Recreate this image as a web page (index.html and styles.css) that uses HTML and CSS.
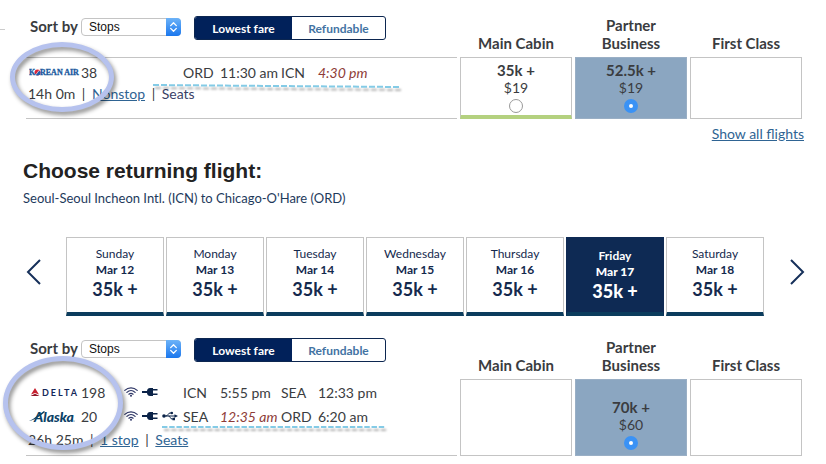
FILE: index.html
```html
<!DOCTYPE html>
<html lang="en">
<head>
  <meta charset="UTF-8">
  <title>Choose returning flight</title>
  <meta name="viewport" content="width=device-width, initial-scale=1.0">
  <link rel="stylesheet" href="styles.css">
</head>
<body>

  <!-- shared icons -->
  <svg class="sprite" aria-hidden="true">
    <symbol id="stepper" viewBox="0 0 16 18">
      <path d="M5 7.5 L8 4.5 L11 7.5 M5 10.5 L8 13.5 L11 10.5" fill="none" stroke="#fff" stroke-width="1.4" stroke-linecap="round" stroke-linejoin="round"/>
    </symbol>
    <symbol id="wifi" viewBox="0 0 14 10">
      <path d="M0.8 3.4 C4.4 0 9.6 0 13.2 3.4 M2.9 5.4 C5.3 3.1 8.7 3.1 11.1 5.4 M4.9 7.2 C6.2 6.1 7.8 6.1 9.1 7.2" fill="none" stroke="#2f3767" stroke-width="1.2" stroke-linecap="round"/>
      <circle cx="7" cy="8.7" r="1" fill="#2f3767"/>
    </symbol>
    <symbol id="plug" viewBox="0 0 16 10">
      <path d="M0 4 H5 C5 2.5 6 1.2 8 1 H11 V9 H8 C6 8.8 5 7.5 5 6 H0 Z" fill="#0b2348"/>
      <path d="M11 2.7 H15.5 M11 7.3 H15.5" stroke="#0b2348" stroke-width="1.6"/>
    </symbol>
    <symbol id="usb" viewBox="0 0 16 10">
      <path d="M2 5 H13 M4 5 C6 5 6 2 8 2 H9.5 M6.5 5 C8.5 5 8 8 10 8 H11" fill="none" stroke="#0b2348" stroke-width="1"/>
      <circle cx="2" cy="5" r="1.8" fill="#0b2348"/>
      <circle cx="9.8" cy="2" r="1.3" fill="#0b2348"/>
      <path d="M12.5 3.2 L16 5 L12.5 6.8 Z M10.5 6.8 H13 V9.2 H10.5 Z" fill="#0b2348"/>
    </symbol>
  </svg>

  <main class="page">

    <table class="flights">
      <thead>
        <tr>
          <th class="tools">
            <div class="toolbar">
              <label class="sort-label" for="sortOut">Sort by</label>
              <span class="select">
                <select id="sortOut">
                  <option>Stops</option>
                </select>
                <svg class="stepper"><use href="#stepper"/></svg>
              </span>
              <div class="toggle">
                <button type="button" class="active">Lowest fare</button>
                <button type="button">Refundable</button>
              </div>
            </div>
          </th>
          <th class="cabin">Main Cabin</th>
          <th class="cabin">Partner Business</th>
          <th class="cabin">First Class</th>
        </tr>
      </thead>
      <tbody>
        <tr class="outbound">
          <td class="flight">
            <div class="leg">
              <svg class="logo" viewBox="0 0 52 14" role="img" aria-label="Korean Air">
                <text class="korean" x="0" y="10">K</text>
                <circle cx="8.5" cy="7.5" r="3" fill="#d8283c"/>
                <path d="M5.5 7.5 A1.5 1.5 0 0 0 8.5 7.5 A1.5 1.5 0 0 1 11.5 7.5 A3 3 0 0 1 5.5 7.5 Z" fill="#1f5fae"/>
                <path d="M6 10.5 L11 4.5" stroke="#fff" stroke-width="0.6"/>
                <text class="korean" x="11" y="10">REAN AIR</text>
              </svg>
              <span>38</span>
              <span class="amenities"></span>
              <span>ORD</span>
              <span>11:30 am</span>
              <span>ICN</span>
              <em>4:30 pm</em>
            </div>
            <div class="details">14h 0m <i>|</i> <a href="#">Nonstop</a> <i>|</i> <a class="plain" href="#">Seats</a></div>
            <svg class="mark-line" viewBox="0 0 248 6" preserveAspectRatio="none"><path d="M0 2 L247 4"/></svg>
            <div class="mark-ring"></div>
          </td>
          <td class="fare lowest">
            <label><b>35k +</b><span>$19</span><input type="radio" name="out"></label>
          </td>
          <td class="fare selected">
            <label><b>52.5k +</b><span>$19</span><input type="radio" name="out" checked></label>
          </td>
          <td class="fare"></td>
        </tr>
      </tbody>
    </table>

    <p class="show-all"><a href="#">Show all flights</a></p>

    <h1>Choose returning flight:</h1>
    <p class="route">Seoul-Seoul Incheon Intl. (ICN) to Chicago-O'Hare (ORD)</p>

    <nav class="dates">
      <button type="button" class="arrow" aria-label="Previous dates">
        <svg viewBox="0 0 16 28"><path d="M14 2 L2 14 L14 26"/></svg>
      </button>
      <div class="days">
        <button type="button" class="day">Sunday<b>Mar 12</b><strong>35k +</strong></button>
        <button type="button" class="day">Monday<b>Mar 13</b><strong>35k +</strong></button>
        <button type="button" class="day">Tuesday<b>Mar 14</b><strong>35k +</strong></button>
        <button type="button" class="day">Wednesday<b>Mar 15</b><strong>35k +</strong></button>
        <button type="button" class="day">Thursday<b>Mar 16</b><strong>35k +</strong></button>
        <button type="button" class="day current">Friday<b>Mar 17</b><strong>35k +</strong></button>
        <button type="button" class="day">Saturday<b>Mar 18</b><strong>35k +</strong></button>
      </div>
      <button type="button" class="arrow next" aria-label="Next dates">
        <svg viewBox="0 0 16 28"><path d="M2 2 L14 14 L2 26"/></svg>
      </button>
    </nav>

    <table class="flights">
      <thead>
        <tr>
          <th class="tools">
            <div class="toolbar">
              <label class="sort-label" for="sortBack">Sort by</label>
              <span class="select">
                <select id="sortBack">
                  <option>Stops</option>
                </select>
                <svg class="stepper"><use href="#stepper"/></svg>
              </span>
              <div class="toggle">
                <button type="button" class="active">Lowest fare</button>
                <button type="button">Refundable</button>
              </div>
            </div>
          </th>
          <th class="cabin">Main Cabin</th>
          <th class="cabin">Partner Business</th>
          <th class="cabin">First Class</th>
        </tr>
      </thead>
      <tbody>
        <tr class="return">
          <td class="flight">
            <div class="leg">
              <svg class="logo" viewBox="0 0 52 14" role="img" aria-label="Delta">
                <path d="M6 3 L6 8 L2 9.5 Z M6 3 L10 9.5 L6 8 Z" fill="#c8202f"/>
                <path d="M1.5 11 L6 8.7 L10.5 11 Z" fill="#8e1526"/>
                <text class="delta" x="13" y="11">DELTA</text>
              </svg>
              <span>198</span>
              <span class="amenities">
                <svg class="wifi"><use href="#wifi"/></svg>
                <svg><use href="#plug"/></svg>
              </span>
              <span>ICN</span>
              <span>5:55 pm</span>
              <span>SEA</span>
              <span>12:33 pm</span>
            </div>
            <div class="leg">
              <svg class="logo tall" viewBox="0 0 52 18" role="img" aria-label="Alaska">
                <path d="M0 14 C5 12 9 8 15 4 L16 5 C11 9 6 13 0 14 Z" fill="#0b4266"/>
                <text class="alaska" x="5" y="15">Alaska</text>
                <circle cx="45" cy="14" r="0.6" fill="#0b4266"/>
              </svg>
              <span>20</span>
              <span class="amenities">
                <svg class="wifi"><use href="#wifi"/></svg>
                <svg><use href="#plug"/></svg>
                <svg><use href="#usb"/></svg>
              </span>
              <span>SEA</span>
              <em>12:35 am</em>
              <span>ORD</span>
              <span>6:20 am</span>
            </div>
            <div class="details">26h 25m <i>|</i> <a href="#">1 stop</a> <i>|</i> <a href="#">Seats</a></div>
            <svg class="mark-line" viewBox="0 0 248 6" preserveAspectRatio="none"><path d="M0 3 L247 3"/></svg>
            <div class="mark-ring"></div>
          </td>
          <td class="fare"></td>
          <td class="fare selected">
            <label><b>70k +</b><span>$60</span><input type="radio" name="back" checked></label>
          </td>
          <td class="fare"></td>
        </tr>
      </tbody>
    </table>

  </main>

</body>
</html>
```
FILE: styles.css
```css
* { box-sizing: border-box; }

body {
  margin: 0;
  background-color: #fff;
  color: #3a3c40;
  font-family: Lato, "Open Sans", sans-serif;
  font-size: 14px;
}

button {
  margin: 0;
  padding: 0;
  border: none;
  background: none;
  font-family: inherit;
  cursor: pointer;
}

a { color: #2f6493; }

h1, p { margin: 0; }

.sprite {
  position: absolute;
  width: 0;
  height: 0;
}

.page {
  position: relative;
  padding: 16px 21px 8px 23px;
}

/* end of the rule that runs in from the left edge */
.page::before {
  content: "";
  position: absolute;
  left: 0;
  top: 29px;
  width: 5px;
  height: 1px;
  background-color: #ccc;
}

/* flight tables */
.flights {
  width: 100%;
  table-layout: fixed;
  border-collapse: separate;
  border-spacing: 3px 0;
}

.flights th, .flights td { padding: 0; }

.cabin {
  width: 112px;
  font-size: 15px;
  line-height: 18px;
  vertical-align: bottom;
}

.flights .cabin { padding: 0 16px 5px; }

.flights .tools {
  padding: 0 0 17px 4px;
  text-align: left;
}

.toolbar {
  display: flex;
  align-items: flex-start;
  height: 24px;
}

.sort-label {
  width: 51px;
  font-size: 15px;
  line-height: 20px;
  white-space: nowrap;
}

.select {
  position: relative;
  width: 100px;
  height: 18px;
  margin: 2px 13px 0 0;
}

.select select {
  display: block;
  width: 100%;
  height: 18px;
  padding: 0 20px 0 7px;
  appearance: none;
  border: 1px solid #c4c4c4;
  border-radius: 4px;
  background-color: #fff;
  color: #111;
  font-family: "Liberation Sans", Arial, sans-serif;
  font-size: 12px;
}

.stepper {
  position: absolute;
  top: 0;
  right: 0;
  width: 15px;
  height: 18px;
  border-radius: 0 4px 4px 0;
  background: linear-gradient(#6db3f8, #1a77ee);
  pointer-events: none;
}

.toggle {
  display: flex;
  height: 24px;
  border: 1px solid #0c2650;
  border-radius: 3px;
  overflow: hidden;
}

.toggle button {
  width: 93px;
  color: #4373a3;
  font-size: 12px;
  font-weight: bold;
}

.toggle .active {
  width: 97px;
  background-color: #01215a;
  color: #fff;
}

.flight {
  position: relative;
  border-top: 1px solid #c4c4c4;
  border-bottom: 1px solid #c4c4c4;
  vertical-align: top;
}

.outbound { height: 62px; }
.outbound .flight { padding-top: 3px; }
.return { height: 77px; }
.return .flight { border-top-color: transparent; }

.leg {
  display: grid;
  grid-template-columns: 52px 42px 60px 37px 61px 37px 1fr;
  align-items: center;
  height: 22px;
  padding-left: 3px;
  white-space: nowrap;
}

.return .leg { height: 24px; }

.leg em { color: #8e3b37; }

.logo {
  width: 52px;
  height: 14px;
}

.logo.tall { height: 18px; }

.korean {
  fill: #1a5a9e;
  stroke: #1a5a9e;
  stroke-width: 0.3px;
  font-family: "Liberation Serif", serif;
  font-size: 8px;
  font-weight: bold;
}

.delta {
  fill: #14285a;
  font-family: Lato, sans-serif;
  font-size: 9px;
  font-weight: bold;
  letter-spacing: 2px;
}

.alaska {
  fill: #0b4266;
  font-family: Lato, sans-serif;
  font-size: 14px;
  font-style: italic;
  font-weight: 900;
}

.amenities {
  display: flex;
  align-items: center;
  gap: 4px;
  padding-left: 1px;
}

.amenities svg {
  width: 16px;
  height: 10px;
}

.amenities .wifi { width: 14px; }

.details {
  padding-left: 2px;
  line-height: 22px;
}

.return .details { line-height: 24px; }

.details i {
  margin: 0 3px;
  font-style: normal;
}

.details .plain {
  color: #3a3f66;
  text-decoration: none;
}

/* hand-drawn highlights over the flight details */
.mark-ring {
  position: absolute;
  left: -16px;
  top: -16px;
  width: 104px;
  height: 70px;
  border: 5px solid #b6c2ee;
  border-radius: 50%;
  filter: drop-shadow(2px 3px 2px rgba(0, 0, 0, 0.45));
  pointer-events: none;
}

.mark-line {
  position: absolute;
  left: 127px;
  top: 25px;
  width: 248px;
  height: 6px;
  overflow: visible;
  filter: drop-shadow(2px 3px 1px rgba(0, 0, 0, 0.3));
  pointer-events: none;
}

.mark-line path {
  fill: none;
  stroke: #84cbe6;
  stroke-width: 2;
  stroke-dasharray: 6 2;
}

.return .mark-ring {
  left: -23px;
  top: -24px;
  width: 120px;
  height: 94px;
}

.return .mark-line {
  left: 136px;
  top: 44px;
  width: 224px;
}

/* fares */
.fare {
  border: 1px solid #c4c4c4;
  text-align: center;
  vertical-align: bottom;
}

.flights .fare { padding-bottom: 5px; }

.flights .lowest {
  padding-bottom: 2px;
  border-bottom: 4px solid #b4d17f;
}

.selected {
  border-color: #9aafc5;
  background-color: #8ba6c1;
}

.fare label {
  display: flex;
  flex-direction: column;
  align-items: center;
  line-height: 18px;
}

.fare b { font-size: 15px; }

.fare input {
  width: 14px;
  height: 14px;
  margin: 2px 0 0;
  appearance: none;
  border: 1px solid #999;
  border-radius: 50%;
  background-color: #fff;
}

.fare input:checked {
  border: 5px solid #3a92f5;
}

/* heading */
.show-all {
  padding: 5px 1px 0 0;
  line-height: 20px;
  text-align: right;
}

h1 {
  margin-top: 15px;
  color: #222;
  font-family: "Liberation Sans", Arial, sans-serif;
  font-size: 21px;
  line-height: 24px;
}

.route {
  margin-top: 5px;
  color: #1e3a5c;
  font-size: 13px;
  line-height: 20px;
}

/* date strip */
.dates {
  display: flex;
  align-items: stretch;
  margin: 29px 0 22px;
}

.arrow {
  width: 43px;
  padding: 0 0 6px 3px;
  text-align: left;
}

.arrow.next {
  width: 41px;
  padding-left: 0;
  text-align: right;
}

.arrow svg {
  display: inline-block;
  width: 16px;
  height: 28px;
}

.arrow path {
  fill: none;
  stroke: #16305a;
  stroke-width: 2;
}

.days {
  display: grid;
  flex: 1;
  grid-template-columns: repeat(7, 1fr);
  gap: 2px;
}

.day {
  height: 79px;
  padding-bottom: 4px;
  border: 1px solid #c4c4c4;
  border-bottom: 4px solid #0b3c5d;
  color: #14294d;
  font-size: 12px;
  line-height: 16px;
}

.day b, .day strong { display: block; }

.day strong {
  font-size: 18px;
  line-height: 23px;
}

.day.current {
  padding-bottom: 0;
  border-color: #0e2a54 #0e2a54 #0b3c5d;
  background-color: #0e2a54;
  color: #fff;
  font-weight: bold;
}
```
